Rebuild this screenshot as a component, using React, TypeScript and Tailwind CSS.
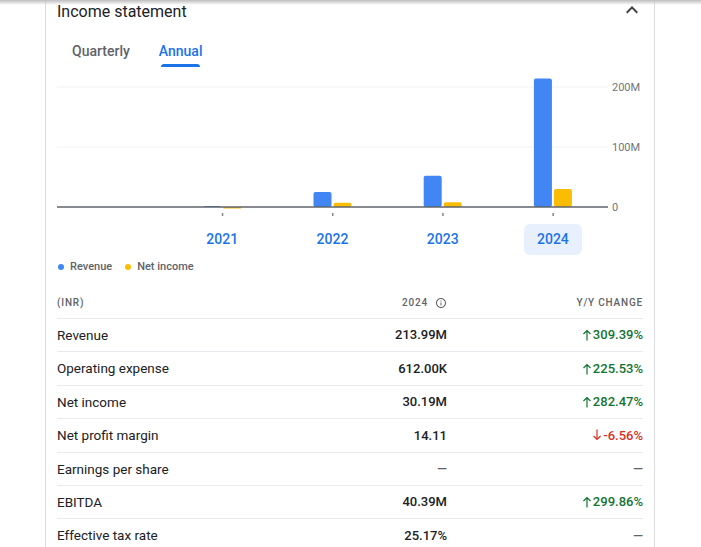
import React from 'react';

const years = [
  { year: '', revenue: 0, net: 0 },
  { year: '2021', revenue: 1.6, net: -2.5 },
  { year: '2022', revenue: 25, net: 7 },
  { year: '2023', revenue: 52, net: 8 },
  { year: '2024', revenue: 213.99, net: 30.19 },
];

const rows = [
  { label: 'Revenue', value: '213.99M', change: '309.39%', dir: 'up' },
  { label: 'Operating expense', value: '612.00K', change: '225.53%', dir: 'up' },
  { label: 'Net income', value: '30.19M', change: '282.47%', dir: 'up' },
  { label: 'Net profit margin', value: '14.11', change: '-6.56%', dir: 'down' },
  { label: 'Earnings per share', value: '—', change: '—', dir: 'none' },
  { label: 'EBITDA', value: '40.39M', change: '299.86%', dir: 'up' },
  { label: 'Effective tax rate', value: '25.17%', change: '—', dir: 'none' },
];

// chart geometry: plot is 551px wide, baseline at y=135, 0.6px per million
const PLOT_W = 551;
const SLOT = PLOT_W / 5;
const BASE = 135;
const SCALE = 0.6;

const Arrow = ({ down }: { down?: boolean }) => (
  <svg width="10" height="12" viewBox="0 0 10 12" className={down ? 'rotate-180' : ''}>
    <path d="M5 1.5V11.5M1.5 5L5 1.5L8.5 5" fill="none" stroke="currentColor" strokeWidth="1.2" />
  </svg>
);

const Chart = () => (
  <svg width="586" height="150" className="block">
    <line x1="0" x2={PLOT_W} y1="15" y2="15" stroke="#f1f3f4" strokeWidth="1" />
    <line x1="0" x2={PLOT_W} y1="75" y2="75" stroke="#f1f3f4" strokeWidth="1" />
    {years.map((y, i) => {
      const c = SLOT * i + SLOT / 2;
      if (!y.year) return null;
      const rh = y.revenue * SCALE;
      const nh = y.net * SCALE;
      return (
        <g key={i}>
          <rect x={c - 19} y={BASE - rh} width="18" height={Math.max(rh, 0)} rx="2" fill="#4285f4" />
          {nh > 0 ? (
            <rect x={c + 1} y={BASE - nh} width="18" height={nh} rx="2" fill="#fbbc04" />
          ) : (
            <rect x={c + 1} y={BASE} width="18" height={-nh} fill="#fbbc04" />
          )}
          <rect x={c - 0.5} y="141" width="1.5" height="3" fill="#80868b" />
        </g>
      );
    })}
    <line x1="0" x2={PLOT_W} y1={BASE} y2={BASE} stroke="#5f6368" strokeWidth="1.5" />
    <text x="555" y="19" fontSize="11" fill="#70757a" fontFamily="Roboto, sans-serif">200M</text>
    <text x="555" y="79" fontSize="11" fill="#70757a" fontFamily="Roboto, sans-serif">100M</text>
    <text x="555" y="139" fontSize="11" fill="#70757a" fontFamily="Roboto, sans-serif">0</text>
  </svg>
);

export default function App() {
  return (
    <div className="relative w-[701px] h-[547px] overflow-hidden bg-white font-['Roboto',sans-serif]">
      <div className="absolute top-0 left-0 right-0 h-[5px] bg-gradient-to-b from-[#bdbdbd] to-transparent" />
      <div className="ml-[45px] w-[610px] h-full border-x border-[#dadce0] px-[11px]">
        {/* header */}
        <div className="flex items-center justify-between h-[22px]">
          <h2 className="text-[16px] text-[#202124] leading-[22px] pt-[1px]">Income statement</h2>
          <svg width="24" height="24" viewBox="0 0 24 24" className="mr-[-1px] mt-[-2px]">
            <path d="M12 8l-6 6 1.41 1.41L12 10.83l4.59 4.58L18 14z" fill="#3c4043" />
          </svg>
        </div>

        {/* tabs */}
        <div className="flex gap-[29px] pl-[15px] mt-[19px]">
          <div className="flex flex-col">
            <span className="text-[14px] leading-[20px] font-medium text-[#5f6368]">Quarterly</span>
          </div>
          <div className="flex flex-col">
            <span className="text-[14px] leading-[20px] font-medium text-[#1a73e8]">Annual</span>
            <div className="h-[3px] mx-[2px] mt-[3px] rounded-t-[3px] bg-[#1a73e8]" />
          </div>
        </div>

        {/* chart */}
        <div className="mt-[5px]">
          <Chart />
          <div className="grid grid-cols-5 w-[551px] mt-[2px]">
            {years.map((y, i) => (
              <div key={i} className="flex justify-center">
                {y.year && (
                  <span
                    className={`w-[58px] h-[31px] flex items-center justify-center rounded-[6px] text-[14px] font-medium text-[#1a73e8] ${
                      y.year === '2024' ? 'bg-[#e8f0fe]' : ''
                    }`}
                  >
                    {y.year}
                  </span>
                )}
              </div>
            ))}
          </div>
          <div className="flex items-center gap-[13px] mt-[5px] h-[14px] text-[11px] font-medium text-[#5f6368]">
            <span className="flex items-center gap-[6px] pl-[1px]">
              <span className="w-[6px] h-[6px] rounded-full bg-[#4285f4]" />
              Revenue
            </span>
            <span className="flex items-center gap-[6px]">
              <span className="w-[6px] h-[6px] rounded-full bg-[#fbbc04]" />
              Net income
            </span>
          </div>
        </div>

        {/* table */}
        <div className="mt-[12px]">
          <div className="flex items-center h-[33px] pt-[1px] border-b border-[#e8eaed] text-[10px] font-medium tracking-[0.8px] text-[#5f6368]">
            <span className="flex-1">(INR)</span>
            <span className="flex items-center gap-[7px] w-[200px] justify-end">
              2024
              <svg width="12" height="12" viewBox="0 0 24 24">
                <path
                  d="M11 7h2v2h-2zm0 4h2v6h-2zm1-9C6.48 2 2 6.48 2 12s4.48 10 10 10 10-4.48 10-10S17.52 2 12 2zm0 18c-4.41 0-8-3.59-8-8s3.59-8 8-8 8 3.59 8 8-3.59 8-8 8z"
                  fill="#5f6368"
                />
              </svg>
            </span>
            <span className="w-[196px] text-right">Y/Y CHANGE</span>
          </div>
          {rows.map((r) => (
            <div key={r.label} className="flex items-center h-[33.4px] border-b border-[#e8eaed] text-[13px]">
              <span className="flex-1 text-[13.5px] text-[#202124]">{r.label}</span>
              <span
                className={`w-[200px] text-right font-medium ${r.value === '—' ? 'text-[#5f6368]' : 'text-[#202124]'}`}
              >
                {r.value}
              </span>
              <span
                className={`w-[196px] flex items-center justify-end gap-[1px] font-medium ${
                  r.dir === 'up' ? 'text-[#137333]' : r.dir === 'down' ? 'text-[#d93025]' : 'text-[#5f6368]'
                }`}
              >
                {r.dir !== 'none' && <Arrow down={r.dir === 'down'} />}
                {r.change}
              </span>
            </div>
          ))}
        </div>
      </div>
    </div>
  );
}
